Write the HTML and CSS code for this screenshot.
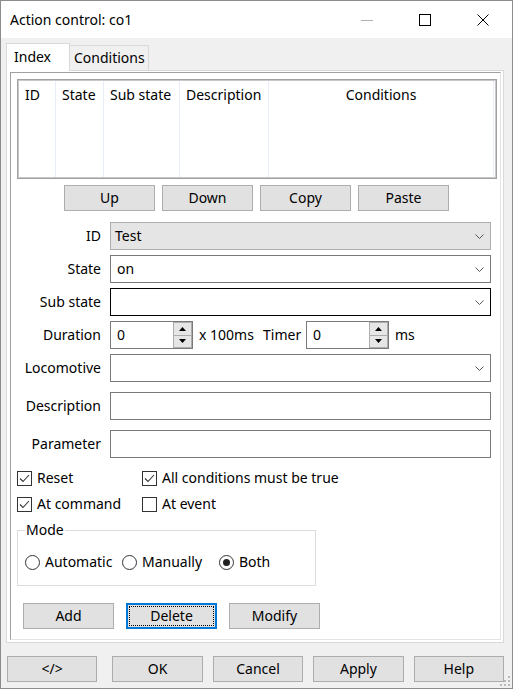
FILE: index.html
```html
<!DOCTYPE html>
<html lang="en">

<head>
    <meta charset="UTF-8">
    <meta name="viewport" content="width=device-width, initial-scale=1.0">
    <title>Action control: co1</title>

    <link rel="stylesheet" href="styles.css">
</head>

<body>
    <div class="window">
        <div class="titlebar">
            <span class="title">Action control: co1</span>
            <div class="caption">
                <div class="cap-btn">
                    <svg width="12" height="12" viewBox="0 0 12 12"><line x1="0" y1="6.5" x2="12" y2="6.5" stroke="#b0b0b0" stroke-width="1" /></svg>
                </div>
                <div class="cap-btn">
                    <svg width="12" height="12" viewBox="0 0 12 12"><rect x="0.5" y="0.5" width="11" height="11" fill="none" stroke="#000" stroke-width="1" /></svg>
                </div>
                <div class="cap-btn">
                    <svg width="12" height="12" viewBox="0 0 12 12"><path d="M0.5 0.5 L11.5 11.5 M11.5 0.5 L0.5 11.5" stroke="#000" stroke-width="1" /></svg>
                </div>
            </div>
        </div>

        <div class="client">
            <div class="tabs">
                <div class="tab active">Index</div>
                <div class="tab">Conditions</div>
            </div>

            <div class="tabpanel">
                <div class="page">

                    <!-- list of entries -->
                    <div class="list">
                        <div class="col c-id"><div class="head">ID</div></div>
                        <div class="col c-state"><div class="head">State</div></div>
                        <div class="col c-sub"><div class="head">Sub state</div></div>
                        <div class="col c-desc"><div class="head">Description</div></div>
                        <div class="col c-cond"><div class="head center">Conditions</div></div>
                    </div>

                    <div class="btn-row">
                        <div class="btn">Up</div>
                        <div class="btn">Down</div>
                        <div class="btn">Copy</div>
                        <div class="btn">Paste</div>
                    </div>

                    <div class="form">
                        <div class="row">
                            <span class="label">ID</span>
                            <div class="field combo disabled">
                                <span class="value">Test</span>
                                <svg class="chev" width="9" height="5" viewBox="0 0 9 5"><polyline points="0.5,0.5 4.5,4.5 8.5,0.5" fill="none" stroke="#555" stroke-width="1" /></svg>
                            </div>
                        </div>
                        <div class="row">
                            <span class="label">State</span>
                            <div class="field combo">
                                <span class="value">on</span>
                                <svg class="chev" width="9" height="5" viewBox="0 0 9 5"><polyline points="0.5,0.5 4.5,4.5 8.5,0.5" fill="none" stroke="#555" stroke-width="1" /></svg>
                            </div>
                        </div>
                        <div class="row">
                            <span class="label">Sub state</span>
                            <div class="field combo hot">
                                <span class="value"></span>
                                <svg class="chev" width="9" height="5" viewBox="0 0 9 5"><polyline points="0.5,0.5 4.5,4.5 8.5,0.5" fill="none" stroke="#555" stroke-width="1" /></svg>
                            </div>
                        </div>
                        <div class="row">
                            <span class="label">Duration</span>
                            <div class="spin">
                                <span class="value">0</span>
                                <div class="spin-btns">
                                    <div class="spin-btn"><svg width="7" height="4" viewBox="0 0 7 4"><polygon points="0,4 3.5,0 7,4" fill="#000" /></svg></div>
                                    <div class="spin-btn"><svg width="7" height="4" viewBox="0 0 7 4"><polygon points="0,0 7,0 3.5,4" fill="#000" /></svg></div>
                                </div>
                            </div>
                            <span class="unit">x 100ms</span>
                            <span class="timer">Timer</span>
                            <div class="spin">
                                <span class="value">0</span>
                                <div class="spin-btns">
                                    <div class="spin-btn"><svg width="7" height="4" viewBox="0 0 7 4"><polygon points="0,4 3.5,0 7,4" fill="#000" /></svg></div>
                                    <div class="spin-btn"><svg width="7" height="4" viewBox="0 0 7 4"><polygon points="0,0 7,0 3.5,4" fill="#000" /></svg></div>
                                </div>
                            </div>
                            <span class="ms">ms</span>
                        </div>
                        <div class="row">
                            <span class="label">Locomotive</span>
                            <div class="field combo">
                                <span class="value"></span>
                                <svg class="chev" width="9" height="5" viewBox="0 0 9 5"><polyline points="0.5,0.5 4.5,4.5 8.5,0.5" fill="none" stroke="#555" stroke-width="1" /></svg>
                            </div>
                        </div>
                        <div class="row wide">
                            <span class="label">Description</span>
                            <div class="field"></div>
                        </div>
                        <div class="row wide">
                            <span class="label">Parameter</span>
                            <div class="field"></div>
                        </div>
                    </div>

                    <div class="checks">
                        <div class="check">
                            <span class="box"><svg width="13" height="13" viewBox="0 0 13 13"><polyline points="2,6.5 5,9.5 11,3" fill="none" stroke="#333" stroke-width="1.1" /></svg></span>
                            <span>Reset</span>
                        </div>
                        <div class="check">
                            <span class="box"><svg width="13" height="13" viewBox="0 0 13 13"><polyline points="2,6.5 5,9.5 11,3" fill="none" stroke="#333" stroke-width="1.1" /></svg></span>
                            <span>All conditions must be true</span>
                        </div>
                        <div class="check">
                            <span class="box"><svg width="13" height="13" viewBox="0 0 13 13"><polyline points="2,6.5 5,9.5 11,3" fill="none" stroke="#333" stroke-width="1.1" /></svg></span>
                            <span>At command</span>
                        </div>
                        <div class="check">
                            <span class="box"></span>
                            <span>At event</span>
                        </div>
                    </div>

                    <fieldset class="mode">
                        <legend>Mode</legend>
                        <div class="radios">
                            <div class="radio"><span class="circle"></span><span>Automatic</span></div>
                            <div class="radio"><span class="circle"></span><span>Manually</span></div>
                            <div class="radio"><span class="circle on"><span class="dot"></span></span><span>Both</span></div>
                        </div>
                    </fieldset>

                    <div class="edit-btns">
                        <div class="btn">Add</div>
                        <div class="btn focus">Delete</div>
                        <div class="btn">Modify</div>
                    </div>

                </div>
            </div>

            <div class="dialog-btns">
                <div class="btn">&lt;/&gt;</div>
                <div class="btn">OK</div>
                <div class="btn">Cancel</div>
                <div class="btn">Apply</div>
                <div class="btn">Help</div>
            </div>
        </div>

        <svg class="grip" width="12" height="12" viewBox="0 0 12 12">
            <rect x="9" y="1" width="2" height="2" fill="#b8b8b8" />
            <rect x="5" y="5" width="2" height="2" fill="#b8b8b8" />
            <rect x="9" y="5" width="2" height="2" fill="#b8b8b8" />
            <rect x="1" y="9" width="2" height="2" fill="#b8b8b8" />
            <rect x="5" y="9" width="2" height="2" fill="#b8b8b8" />
            <rect x="9" y="9" width="2" height="2" fill="#b8b8b8" />
        </svg>
    </div>
</body>

</html>
```

FILE: styles.css
```css
* {
    box-sizing: border-box;
}

body {
    margin: 0;
    font-family: "Noto Sans", "Open Sans", sans-serif;
    font-size: 14px;
    line-height: 18px;
    color: #000;
}

.window {
    position: relative;
    width: 513px;
    height: 689px;
    border: 1px solid #8c8c8c;
    background-color: #f0f0f0;
    display: flex;
    flex-direction: column;
}

/* title bar */
.titlebar {
    height: 37px;
    background-color: #fff;
    display: flex;
    align-items: center;
    padding-left: 9px;
    padding-top: 1px;
}

.title {
    flex: 1;
}

.caption {
    display: flex;
    height: 100%;
}

.cap-btn {
    width: 58px;
    display: flex;
    align-items: center;
    justify-content: center;
}

/* tabs */
.client {
    flex: 1;
    padding: 5px 8px 0 5px;
}

.tabs {
    display: flex;
    height: 27px;
    align-items: flex-end;
}

.tab {
    height: 25px;
    width: 79px;
    padding: 3px 0 0 4px;
    border: 1px solid #d9d9d9;
    border-bottom: none;
    border-left: none;
    background-color: #f0f0f0;
}

.tab.active {
    position: relative;
    z-index: 1;
    width: 64px;
    height: 28px;
    margin-bottom: -1px;
    padding: 4px 0 0 7px;
    border-left: 1px solid #d9d9d9;
    background-color: #fff;
}

.tabpanel {
    width: 498px;
    height: 573px;
    border: 1px solid #d9d9d9;
    background-color: #fff;
    padding: 1px 2px 2px 3px;
}

.page {
    height: 100%;
    border-left: 1px solid #a0a0a0;
    border-top: 1px solid #a0a0a0;
    border-right: 1px solid #e3e3e3;
    border-bottom: 1px solid #e3e3e3;
}

/* list */
.list {
    margin: 6px 0 0 6px;
    width: 480px;
    height: 100px;
    border: 1px solid #a0a0a0;
    box-shadow: inset 0 0 0 1px #c8c8c8;
    padding: 1px;
    display: flex;
}

.col {
    border-right: 1px solid #e8eef7;
}

.head {
    height: 28px;
    line-height: 28px;
    padding-left: 6px;
    border-bottom: none;
}

.head.center {
    padding-left: 0;
    text-align: center;
}

.c-id {
    width: 37px;
}

.c-state {
    width: 48px;
}

.c-sub {
    width: 76px;
}

.c-desc {
    width: 89px;
}

.c-cond {
    width: 225px;
}

/* buttons */
.btn {
    width: 91px;
    height: 26px;
    background-color: #e1e1e1;
    border: 1px solid #adadad;
    text-align: center;
    line-height: 24px;
}

.btn.focus {
    border: 2px solid #0078d7;
    line-height: 22px;
    outline: 1px dotted #000;
    outline-offset: -4px;
}

.btn-row {
    display: flex;
    gap: 7px;
    margin-top: 6px;
    padding-left: 53px;
}

/* form */
.form {
    margin-top: 11px;
}

.row {
    display: flex;
    align-items: center;
    height: 28px;
    margin-top: 5px;
}

.row:first-child {
    margin-top: 0;
}

.row.wide {
    margin-top: 10px;
}

.label {
    width: 90px;
    margin-right: 9px;
    text-align: right;
}

.field {
    width: 381px;
    height: 28px;
    border: 1px solid #7a7a7a;
    background-color: #fff;
    display: flex;
    align-items: center;
}

.combo .value {
    flex: 1;
    padding-left: 6px;
}

.combo.disabled {
    background-color: #e5e5e5;
    border-color: #adadad;
}

.combo.disabled .value {
    padding-left: 4px;
}

.combo.hot {
    border-color: #000;
}

.chev {
    margin-right: 6px;
}

.spin {
    width: 83px;
    height: 28px;
    border: 1px solid #7a7a7a;
    background-color: #fff;
    display: flex;
}

.spin .value {
    flex: 1;
    padding-left: 6px;
    line-height: 26px;
}

.spin-btns {
    width: 19px;
    display: flex;
    flex-direction: column;
}

.spin-btn {
    flex: 1;
    background-color: #e6e6e6;
    border: 1px solid #adadad;
    display: flex;
    align-items: center;
    justify-content: center;
}

.spin-btn + .spin-btn {
    border-top: none;
}

.unit {
    width: 64px;
    margin-left: 6px;
}

.timer {
    width: 43px;
}

.ms {
    margin-left: 6px;
}

/* check boxes */
.checks {
    margin-top: 7px;
    padding-left: 6px;
    display: grid;
    grid-template-columns: 125px auto;
    grid-auto-rows: 26px;
}

.check {
    display: flex;
    align-items: center;
}

.box {
    width: 15px;
    height: 15px;
    border: 1px solid #333;
    background-color: #fff;
    margin-right: 5px;
    display: flex;
}

/* mode group */
.mode {
    margin: 4px 0 0 6px;
    width: 299px;
    border: 1px solid #dcdcdc;
    padding: 13px 0 13px 7px;
}

.mode legend {
    padding: 0 1px;
    line-height: 18px;
}

.radios {
    display: grid;
    grid-template-columns: 97px 97px auto;
    height: 20px;
}

.radio {
    display: flex;
    align-items: center;
}

.circle {
    width: 15px;
    height: 15px;
    border: 1px solid #333;
    border-radius: 50%;
    margin-right: 5px;
    display: flex;
    align-items: center;
    justify-content: center;
}

.dot {
    width: 7px;
    height: 7px;
    border-radius: 50%;
    background-color: #1f1f1f;
}

.edit-btns {
    display: flex;
    gap: 12px;
    margin-top: 17px;
    padding-left: 12px;
}

/* dialog buttons */
.dialog-btns {
    display: flex;
    gap: 10px;
    margin-top: 13px;
    padding-left: 1px;
}

.dialog-btns .btn:first-child {
    margin-right: 5px;
}

.grip {
    position: absolute;
    right: 1px;
    bottom: 1px;
}
```
